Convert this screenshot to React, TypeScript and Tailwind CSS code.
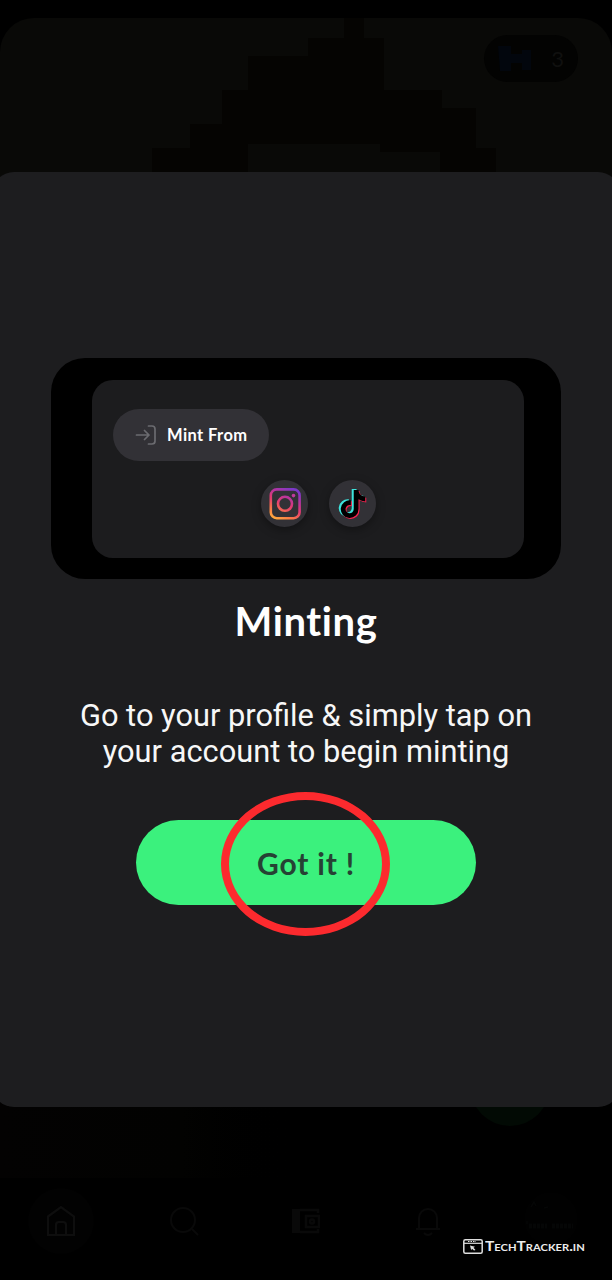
import { FaTiktok } from 'react-icons/fa6';

const rounded = "font-['Lato',sans-serif] font-bold";

function MintIcon() {
  return (
    <svg viewBox="0 0 22 22" className="h-[22px] w-[22px] shrink-0" fill="none" stroke="#6b6b70" strokeWidth="1.7" strokeLinecap="round" strokeLinejoin="round">
      <path d="M1.500 11H14M9.500 6.500 14 11l-4.500 4.500M13.500 2h3.500q3 0 3 3v12q0 3-3 3h-3.500" />
    </svg>
  );
}

function InstagramIcon() {
  return (
    <svg viewBox="0 0 32 32" className="h-8 w-8" fill="none">
      <defs>
        <linearGradient id="insta" x1="6" y1="32" x2="22" y2="0" gradientUnits="userSpaceOnUse">
          <stop offset="0" stopColor="#ffb13c" />
          <stop offset="0.25" stopColor="#f97748" />
          <stop offset="0.5" stopColor="#e53c70" />
          <stop offset="0.75" stopColor="#b534a1" />
          <stop offset="1" stopColor="#7b39c9" />
        </linearGradient>
      </defs>
      <rect x="1.800" y="1.400" width="28.800" height="28.800" rx="6" stroke="url(#insta)" strokeWidth="2.600" />
      <circle cx="16" cy="15.800" r="7" stroke="url(#insta)" strokeWidth="2.600" />
      <circle cx="24.500" cy="7.600" r="1.800" fill="#c23a9c" />
    </svg>
  );
}

function TiktokIcon() {
  return (
    <div className="relative h-7 w-7">
      <FaTiktok className="absolute -top-[1px] -left-[1.500px] h-7 w-7 text-[#3ee3dc]" />
      <FaTiktok className="absolute top-[1px] left-[1.500px] h-7 w-7 text-[#f8224f]" />
      <FaTiktok className="absolute top-0 left-0 h-7 w-7 text-black" />
    </div>
  );
}

function Backdrop() {
  return (
    <div className="flex h-full flex-col pt-[18px]">
      <div className="relative flex h-[260px] justify-end rounded-t-[34px] bg-[#090907] pt-[17px] pr-[34px]">
        <svg viewBox="0 0 400 154" className="absolute top-0 left-[130px] h-[154px] w-[400px]" fill="#050402">
          <path d="M214 0h20v20h20v52h58v18h34v40h20v24h-56v-20h-60v-8H118v28H22v-24h38v-24h32V72h26V38h60V20h36z" />
        </svg>
        <div className="flex h-[47px] w-[94px] items-center justify-between rounded-full bg-[#030302] pr-[14px] pl-[14px]">
          <svg viewBox="0 0 38 26" className="h-[26px] w-[38px]" fill="#02060d">
            <path d="M0 0h13v8h11V4h9v20h-9v-7H13v8H2z" />
          </svg>
          <span className="font-['Lato',sans-serif] text-[22px] text-[#10100f]">3</span>
        </div>
      </div>
      <div className="flex-1" />
      <div className="flex h-[140px] items-start justify-end bg-linear-to-r from-[#030202] from-0% via-[#020201] via-30% to-black to-50% pr-[62px]">
        <div className="h-[88px] w-[80px] rounded-full bg-[#020a04]" />
      </div>
      <div className="grid h-[102px] grid-cols-5 items-start bg-black pt-[10px] [&>*]:justify-self-center">
        <div className="flex h-[66px] w-[66px] items-center justify-center rounded-full bg-[#020202]">
          <svg viewBox="0 0 30 32" className="h-8 w-[30px]" fill="none" stroke="#0e0e0e" strokeWidth="2.200">
            <path d="M2 11.500 15 2l13 9.500V30H2zM10 30V20q0-3 3-3h4q3 0 3 3v10" />
          </svg>
        </div>
        <svg viewBox="0 0 30 30" className="mt-[18px] h-[30px] w-[30px]" fill="none" stroke="#090909" strokeWidth="2">
          <circle cx="14" cy="14" r="12" />
          <path d="m23 23 6 6" />
        </svg>
        <svg viewBox="0 0 28 26" className="mt-5 h-[26px] w-7" fill="none" stroke="#090909" strokeWidth="2.500">
          <path d="M4 1v24" strokeWidth="8" />
          <path d="M8 2h18v3M8 24h18v-3M14 8h13v11H14z" />
          <circle cx="20" cy="13.500" r="2" />
        </svg>
        <svg viewBox="0 0 26 32" className="mt-[17px] h-8 w-[26px]" fill="none" stroke="#090909" strokeWidth="2">
          <path d="M1 24h24M4 24V13a9 9 0 0 1 18 0v11M9 28q4 4 8 0" />
        </svg>
        <div className="mt-1 flex h-[54px] w-[54px] items-center justify-center rounded-full bg-[#010101]">
          <svg viewBox="0 0 50 36" className="h-9 w-[50px]" fill="none" stroke="#050606" strokeWidth="1.500">
            <path d="m5 6 3-5 2 4M18 7l4-1M1 20v3" />
            <path d="M3 25h18M26 25h21" strokeWidth="5" strokeDasharray="3 1" />
          </svg>
        </div>
      </div>
    </div>
  );
}

function MintPreview() {
  return (
    <div className="flex h-[221px] w-[510px] rounded-[34px] bg-black pt-[22px] pl-[41px]">
      <div className="flex h-[178px] w-[432px] flex-col rounded-[21px] bg-[#1c1c1e] px-[21px] pt-[29px]">
        <div className="flex h-[52px] w-[156px] items-center rounded-full bg-[#323136] pl-[22px]">
          <MintIcon />
          <span className={`${rounded} ml-[10px] text-[16.500px] leading-5 tracking-[0.4px] whitespace-nowrap text-white`}>Mint From</span>
        </div>
        <div className="mt-[19px] ml-[148px] flex gap-[21px]">
          <div className="flex h-[47px] w-[47px] items-center justify-center rounded-full bg-[#323136] shadow-[0_3px_10px_rgba(0,0,0,0.35)]">
            <InstagramIcon />
          </div>
          <div className="flex h-[47px] w-[47px] items-center justify-center rounded-full bg-[#323136] shadow-[0_3px_10px_rgba(0,0,0,0.35)]">
            <TiktokIcon />
          </div>
        </div>
      </div>
    </div>
  );
}

export default function App() {
  return (
    <main className="relative h-[1280px] w-[612px] overflow-hidden bg-black">
      <Backdrop />
      <section className="absolute top-[172px] -left-[8px] flex h-[935px] w-[628px] flex-col items-center rounded-[22px] bg-[#1d1d1f] pt-[186px]">
        <MintPreview />
        <h1 className={`${rounded} mt-[18px] text-[40px] leading-[48px] tracking-[0.600px] text-white`}>Minting</h1>
        <p className="mt-[53px] text-center font-['Roboto',sans-serif] text-[30.800px] leading-[36px] whitespace-nowrap text-[#f7f7f7]">
          Go to your profile &amp; simply tap on
          <br />
          your account to begin minting
        </p>
        <button className={`${rounded} relative mt-[50px] flex h-[85px] w-[340px] items-center justify-center rounded-full bg-[#3bf17d] text-[30px] tracking-[0.800px] text-[#264234]`}>
          <span className="pt-px">Got it !</span>
          <span className="pointer-events-none absolute -top-[28px] left-[85px] h-[144px] w-[169px] rounded-[50%] border-[8px] border-[#fc2a2e]" />
        </button>
      </section>
      <div className="absolute top-[1238px] left-[463px] flex items-center gap-[2px]">
        <svg viewBox="0 0 20 15" className="h-[15px] w-5" fill="none">
          <rect x="0.800" y="0.800" width="18.400" height="13.400" rx="1.500" stroke="#dedede" strokeWidth="1.500" />
          <path d="M1 4.300h18" stroke="#dedede" strokeWidth="1.200" />
          <path d="M5 2.500h8" stroke="#dedede" strokeWidth="1" strokeDasharray="1.500 1" />
          <path d="m7 6.500 5 1.200-1.500 1 2 2.300-1.500.5-2-1.800-.8 1.500z" fill="#dedede" />
        </svg>
        <span className="mt-[2px] origin-left scale-x-[1.240] font-['Lato',sans-serif] text-[12.500px] leading-[14px] font-bold whitespace-nowrap text-[#ededed] [font-variant:small-caps]">TechTracker.in</span>
      </div>
    </main>
  );
}
